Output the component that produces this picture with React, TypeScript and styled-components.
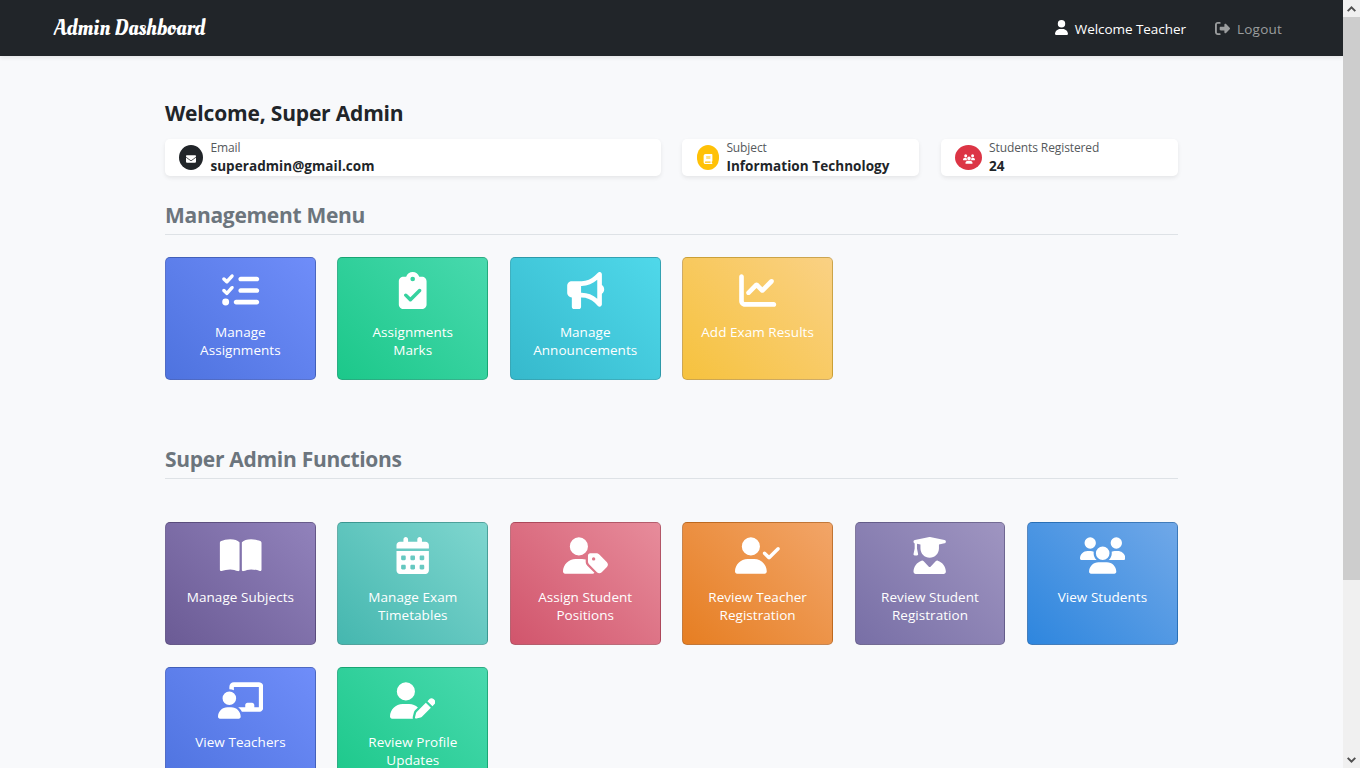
import React from 'react';
import styled, { createGlobalStyle } from 'styled-components';
import type { IconType } from 'react-icons';
import {
  FaUser,
  FaRightFromBracket,
  FaEnvelope,
  FaBook,
  FaUsers,
  FaListCheck,
  FaClipboardCheck,
  FaBullhorn,
  FaChartLine,
  FaBookOpen,
  FaCalendarDays,
  FaUserTag,
  FaUserCheck,
  FaUserGraduate,
  FaChalkboardUser,
  FaUserPen,
} from 'react-icons/fa6';

const GlobalStyle = createGlobalStyle`
  * { box-sizing: border-box; }
  body {
    margin: 0;
    overflow: hidden;
    background: #f8f9fb;
    color: #212529;
    font-family: 'Segoe UI', 'Open Sans', 'Noto Sans', sans-serif;
  }
`;

const Viewport = styled.div`
  display: grid;
  grid-template-columns: minmax(0, 1fr) 17px;
  height: 100vh;
  overflow: hidden;
`;

const Page = styled.div`
  height: 100vh;
  overflow: hidden;
`;

const Navbar = styled.header`
  display: flex;
  align-items: center;
  justify-content: space-between;
  height: 56px;
  padding: 0 61px 0 54px;
  background: #212529;
  box-shadow: 0 2px 4px rgba(0, 0, 0, 0.08);
`;

const Brand = styled.div`
  color: #fff;
  font-family: 'Oleo Script', 'Lobster', 'Liberation Serif', serif;
  font-size: 22px;
  line-height: 57px;
  letter-spacing: -0.18px;
  white-space: nowrap;
`;

const NavLinks = styled.nav`
  display: flex;
  gap: 29px;
`;

const NavLink = styled.a<{ $muted?: boolean }>`
  display: flex;
  align-items: center;
  gap: 7px;
  color: ${(p) => (p.$muted ? '#9b9d9e' : '#fff')};
  font-size: 13.5px;
  line-height: 20px;
  letter-spacing: ${(p) => (p.$muted ? 0.22 : -0.05)}px;
  padding-top: 1px;
  white-space: nowrap;
  svg {
    margin-top: ${(p) => (p.$muted ? 0 : -2)}px;
    width: ${(p) => (p.$muted ? 15 : 13)}px;
    height: 15px;
  }
`;

const Main = styled.main`
  width: 1012.8px;
  margin: 0 auto 0 165px;
  padding-top: 42px;
`;

const Greeting = styled.h1`
  margin: 0;
  height: 41px;
  font-size: 21px;
  line-height: 30px;
  font-weight: 700;
  letter-spacing: -0.18px;
`;

const InfoGrid = styled.div`
  display: grid;
  grid-template-columns: 495.6px 237px 237px;
  column-gap: 21.6px;
  height: 37px;
`;

const InfoCard = styled.div`
  display: flex;
  align-items: center;
  padding-left: 14.4px;
  border-radius: 5px;
  background: #fff;
  box-shadow: 0 2px 4px rgba(0, 0, 0, 0.08);
`;

const InfoIcon = styled.span<{ $color: string; $width: number }>`
  display: flex;
  align-items: center;
  justify-content: center;
  width: ${(p) => p.$width}px;
  height: 25px;
  margin-right: 7px;
  padding-top: 2px;
  border-radius: 50%;
  background: ${(p) => p.$color};
  color: #fff;
  svg {
    width: 12px;
    height: 10px;
  }
`;

const InfoText = styled.div`
  display: flex;
  flex-direction: column;
  white-space: nowrap;
`;

const InfoLabel = styled.span`
  margin-top: -1px;
  color: #55595c;
  font-size: 12px;
  line-height: 18px;
  letter-spacing: -0.1px;
`;

const InfoValue = styled.strong`
  font-size: 13.5px;
  line-height: 19px;
  letter-spacing: 0.06px;
`;

const SectionTitle = styled.h2<{ $top: number; $bottom: number }>`
  height: 36px;
  margin: ${(p) => p.$top}px 0 ${(p) => p.$bottom}px;
  border-bottom: 1px solid #dee2e6;
  color: #6c757d;
  font-size: 21px;
  line-height: 33px;
  font-weight: 700;
  letter-spacing: -0.29px;
`;

const TileGrid = styled.div`
  display: grid;
  grid-template-columns: repeat(6, 1fr);
  grid-auto-rows: 123px;
  gap: 22px 21.6px;
`;

const TileButton = styled.button<{ $from: string; $to: string }>`
  display: flex;
  flex-direction: column;
  align-items: center;
  justify-content: flex-start;
  margin: 0;
  padding: 14px 6px 0;
  border: 1px solid rgba(0, 0, 0, 0.175);
  border-radius: 5px;
  background: linear-gradient(45deg, ${(p) => p.$from}, ${(p) => p.$to});
  color: #fff;
  font-family: inherit;
  font-size: 13.5px;
  line-height: 18px;
  letter-spacing: 0.05px;
  text-align: center;
  svg {
    flex: none;
    margin-bottom: 14px;
    height: 37px;
    width: 45.4px;
  }
`;

const TileLabel = styled.span`
  white-space: pre-line;
`;

const Scrollbar = styled.div`
  display: flex;
  flex-direction: column;
  background: #f0f0f0;
`;

const ScrollArrow = styled.span<{ $down?: boolean }>`
  display: flex;
  align-items: center;
  justify-content: center;
  height: 17px;
  margin-top: ${(p) => (p.$down ? 'auto' : '0')};
  svg {
    transform: ${(p) => (p.$down ? 'rotate(180deg)' : 'none')};
  }
`;

const ScrollThumb = styled.div`
  height: 563px;
  background: #cdcdcd;
`;

const Chevron = () => (
  <svg width="9" height="6" viewBox="0 0 9 6" fill="none" stroke="#505050" strokeWidth="2">
    <path d="M.7 5.1 4.5 1.4 8.3 5.1" />
  </svg>
);

interface Tile {
  label: string;
  icon: IconType;
  from: string;
  to: string;
}

const managementTiles: Tile[] = [
  { label: 'Manage\nAssignments', icon: FaListCheck, from: '#4e73df', to: '#6f8df9' },
  { label: 'Assignments\nMarks', icon: FaClipboardCheck, from: '#1cc88a', to: '#48d9ae' },
  { label: 'Manage\nAnnouncements', icon: FaBullhorn, from: '#36b9cc', to: '#4fd8ea' },
  { label: 'Add Exam Results', icon: FaChartLine, from: '#f6c23e', to: '#fad184' },
];

const adminTiles: Tile[] = [
  { label: 'Manage Subjects', icon: FaBookOpen, from: '#6b5b95', to: '#9182bb' },
  { label: 'Manage Exam\nTimetables', icon: FaCalendarDays, from: '#45b7af', to: '#7fd6cf' },
  { label: 'Assign Student\nPositions', icon: FaUserTag, from: '#d1556c', to: '#e78c9b' },
  { label: 'Review Teacher\nRegistration', icon: FaUserCheck, from: '#e67e22', to: '#f2a568' },
  { label: 'Review Student\nRegistration', icon: FaUserGraduate, from: '#786fa6', to: '#9f95c1' },
  { label: 'View Students', icon: FaUsers, from: '#2e86de', to: '#70a8e8' },
  { label: 'View Teachers', icon: FaChalkboardUser, from: '#4e73df', to: '#6f8df9' },
  { label: 'Review Profile\nUpdates', icon: FaUserPen, from: '#1cc88a', to: '#48d9ae' },
];

const Tiles = ({ items }: { items: Tile[] }) => (
  <TileGrid>
    {items.map(({ label, icon: Icon, from, to }) => (
      <TileButton key={label} $from={from} $to={to}>
        <Icon />
        <TileLabel>{label}</TileLabel>
      </TileButton>
    ))}
  </TileGrid>
);

export default function App() {
  return (
    <Viewport>
      <GlobalStyle />
      <Page>
        <Navbar>
          <Brand>Admin Dashboard</Brand>
          <NavLinks>
            <NavLink>
              <FaUser />
              Welcome Teacher
            </NavLink>
            <NavLink $muted>
              <FaRightFromBracket />
              Logout
            </NavLink>
          </NavLinks>
        </Navbar>
        <Main>
          <Greeting>Welcome, Super Admin</Greeting>
          <InfoGrid>
            <InfoCard>
              <InfoIcon $color="#212529" $width={24}>
                <FaEnvelope />
              </InfoIcon>
              <InfoText>
                <InfoLabel>Email</InfoLabel>
                <InfoValue>superadmin@gmail.com</InfoValue>
              </InfoText>
            </InfoCard>
            <InfoCard>
              <InfoIcon $color="#ffc107" $width={22.8}>
                <FaBook />
              </InfoIcon>
              <InfoText>
                <InfoLabel>Subject</InfoLabel>
                <InfoValue>Information Technology</InfoValue>
              </InfoText>
            </InfoCard>
            <InfoCard>
              <InfoIcon $color="#dc3545" $width={26.8}>
                <FaUsers />
              </InfoIcon>
              <InfoText>
                <InfoLabel>Students Registered</InfoLabel>
                <InfoValue>24</InfoValue>
              </InfoText>
            </InfoCard>
          </InfoGrid>
          <SectionTitle $top={23} $bottom={22}>
            Management Menu
          </SectionTitle>
          <Tiles items={managementTiles} />
          <SectionTitle $top={63} $bottom={43}>
            Super Admin Functions
          </SectionTitle>
          <Tiles items={adminTiles} />
        </Main>
      </Page>
      <Scrollbar>
        <ScrollArrow>
          <Chevron />
        </ScrollArrow>
        <ScrollThumb />
        <ScrollArrow $down>
          <Chevron />
        </ScrollArrow>
      </Scrollbar>
    </Viewport>
  );
}
